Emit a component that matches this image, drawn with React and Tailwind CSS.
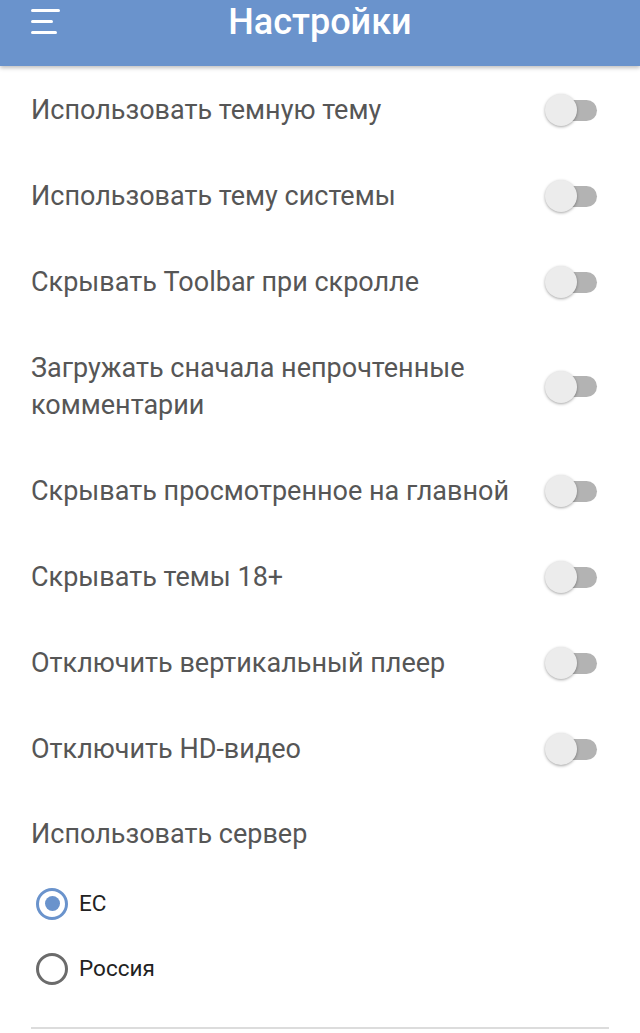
const toggles = [
  "Использовать темную тему",
  "Использовать тему системы",
  "Скрывать Toolbar при скролле",
  "Загружать сначала непрочтенные комментарии",
  "Скрывать просмотренное на главной",
  "Скрывать темы 18+",
  "Отключить вертикальный плеер",
  "Отключить HD-видео",
];

function Switch() {
  return (
    <div className="relative w-[52px] h-[34px] shrink-0 flex items-center">
      <div className="absolute right-0 w-[40px] h-[21px] rounded-full bg-[#b3b3b3]" />
      <div className="absolute left-0 w-[32px] h-[32px] rounded-full bg-[#ececec] shadow-[0_1px_3px_rgba(0,0,0,0.35)]" />
    </div>
  );
}

function Radio({ label, checked }) {
  return (
    <div className="flex items-center h-[65px] pl-[36px]">
      <div
        className={
          "w-[32px] h-[32px] rounded-full border-[3px] flex items-center justify-center " +
          (checked ? "border-[#6a93cc]" : "border-[#6b6b6b]")
        }
      >
        {checked && <div className="w-[15px] h-[15px] rounded-full bg-[#6a93cc]" />}
      </div>
      <span className="ml-[11px] text-[22.5px] text-[#222]">{label}</span>
    </div>
  );
}

export default function App() {
  return (
    <div className="w-[640px] h-[1033px] bg-white overflow-hidden font-['Roboto','Liberation_Sans',sans-serif]">
      {/* Toolbar */}
      <div className="relative h-[66px] bg-[#6a93cc] shadow-[0_2px_4px_rgba(0,0,0,0.25)] flex items-start">
        <div className="absolute left-[31px] top-[9px] flex flex-col gap-[8px]">
          <div className="w-[29px] h-[3px] rounded-full bg-white" />
          <div className="w-[22px] h-[3px] rounded-full bg-white" />
          <div className="w-[26px] h-[3px] rounded-full bg-white" />
        </div>
        <h1 className="w-full text-center text-white text-[36px] font-medium leading-[44px]">
          Настройки
        </h1>
      </div>

      {/* Switch rows */}
      <div className="pt-px">
        {toggles.map((t) => (
          <div key={t} className="flex items-center justify-between pl-[31px] pr-[43px] py-[24.5px]">
            <span className="text-[27px] leading-[37px] text-[#565656] max-w-[490px]">{t}</span>
            <Switch />
          </div>
        ))}
      </div>

      {/* Server */}
      <div className="pl-[31px] pt-[24px] pb-[18px]">
        <span className="block text-[27px] leading-[37px] text-[#565656]">Использовать сервер</span>
      </div>
      <Radio label="ЕС" checked />
      <Radio label="Россия" />
      <div className="mx-[31px] mt-[26px] h-[2px] bg-[#dcdcdc]" />
    </div>
  );
}
